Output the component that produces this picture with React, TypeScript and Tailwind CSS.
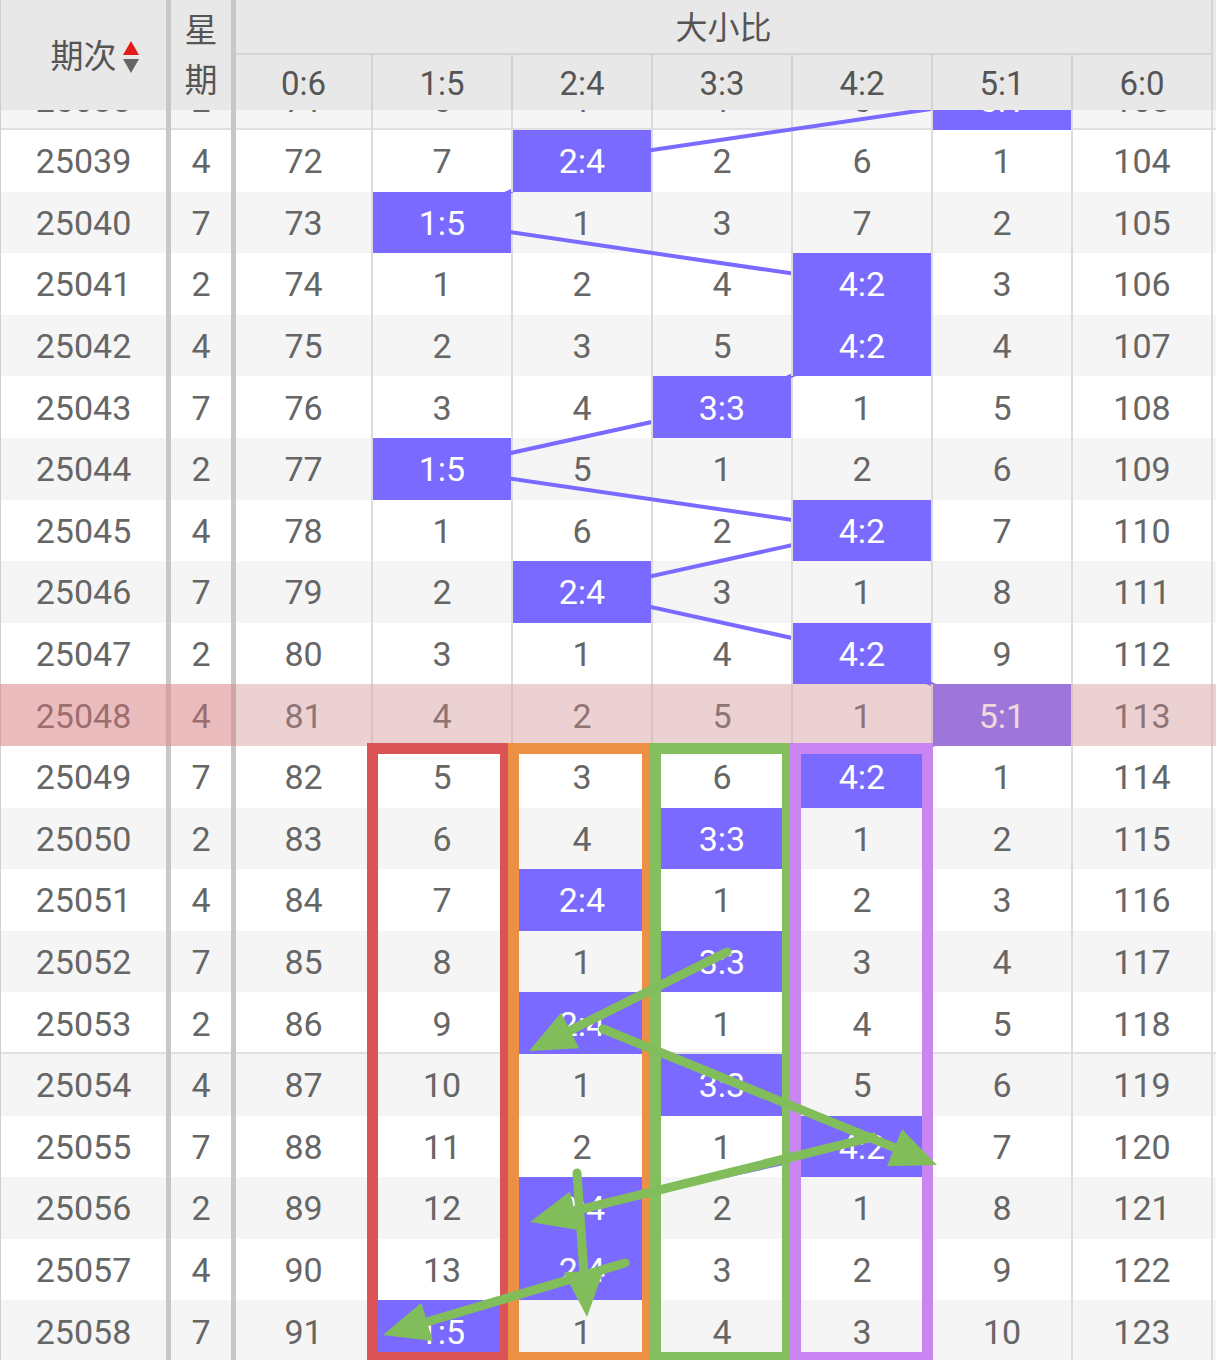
import clsx from "clsx";

const COLS = ["0:6", "1:5", "2:4", "3:3", "4:2", "5:1", "6:0"];
const ROW_H = 61.6;
// centre x of each ratio column, page coords
const CX = [303.5, 441, 581, 721, 861, 1001, 1141];

const GRID = "grid grid-cols-[166px_5px_60px_5px_135px_repeat(6,140px)_2px]";

type Row = { no: number; wk: number; v: (number | null)[] };

// null = the ratio that came out that draw
const ROWS: Row[] = [
  { no: 25038, wk: 2, v: [71, 6, 1, 1, 5, null, 103] },
  { no: 25039, wk: 4, v: [72, 7, null, 2, 6, 1, 104] },
  { no: 25040, wk: 7, v: [73, null, 1, 3, 7, 2, 105] },
  { no: 25041, wk: 2, v: [74, 1, 2, 4, null, 3, 106] },
  { no: 25042, wk: 4, v: [75, 2, 3, 5, null, 4, 107] },
  { no: 25043, wk: 7, v: [76, 3, 4, null, 1, 5, 108] },
  { no: 25044, wk: 2, v: [77, null, 5, 1, 2, 6, 109] },
  { no: 25045, wk: 4, v: [78, 1, 6, 2, null, 7, 110] },
  { no: 25046, wk: 7, v: [79, 2, null, 3, 1, 8, 111] },
  { no: 25047, wk: 2, v: [80, 3, 1, 4, null, 9, 112] },
  { no: 25048, wk: 4, v: [81, 4, 2, 5, 1, null, 113] },
  { no: 25049, wk: 7, v: [82, 5, 3, 6, null, 1, 114] },
  { no: 25050, wk: 2, v: [83, 6, 4, null, 1, 2, 115] },
  { no: 25051, wk: 4, v: [84, 7, null, 1, 2, 3, 116] },
  { no: 25052, wk: 7, v: [85, 8, 1, null, 3, 4, 117] },
  { no: 25053, wk: 2, v: [86, 9, null, 1, 4, 5, 118] },
  { no: 25054, wk: 4, v: [87, 10, 1, null, 5, 6, 119] },
  { no: 25055, wk: 7, v: [88, 11, 2, 1, null, 7, 120] },
  { no: 25056, wk: 2, v: [89, 12, null, 2, 1, 8, 121] },
  { no: 25057, wk: 4, v: [90, 13, null, 3, 2, 9, 122] },
  { no: 25058, wk: 7, v: [91, null, 1, 4, 3, 10, 123] },
];

const ARROWS = [
  [727, 952, 529, 1051],
  [603, 1029, 937, 1165],
  [873, 1137, 530, 1222],
  [577, 1173, 587, 1317],
  [625, 1263, 383, 1335],
];

function SortIcon() {
  return (
    <svg className="absolute left-full top-1/2 ml-[6px] -translate-y-1/2" width="16" height="32" viewBox="0 0 16 32">
      <polygon points="0,14 16,14 8,0" fill="#e41b1b" />
      <polygon points="0,18 16,18 8,32" fill="#666" />
    </svg>
  );
}

function Header() {
  return (
    <div className={clsx(GRID, "relative z-10 h-[110px] grid-rows-[55px_55px] bg-[#e8e8e8] text-[33px] text-[#555]")}>
      <div className="row-span-2 flex items-center justify-center border-l border-[#cfcfcf] pt-[3px]">
        <span className="relative leading-none">
          期次
          <SortIcon />
        </span>
      </div>
      <div className="row-span-2 bg-[#c8c8c8]" />
      <div className="row-span-2 flex flex-col items-center justify-center pt-[2px] leading-[50px]">
        <span>星</span>
        <span>期</span>
      </div>
      <div className="row-span-2 bg-[#c8c8c8]" />
      <div className="col-span-7 flex items-center justify-center border-b-2 border-[#d4d4d4] pt-[2px] text-[32px]">
        大小比
      </div>
      <div className="row-span-2 bg-[#d6d6d6]" />
      {COLS.map((c, i) => (
        <div
          key={c}
          className={clsx("flex items-center justify-center pt-[3px]", i > 0 && "border-l-2 border-[#d4d4d4]")}
        >
          {c}
        </div>
      ))}
    </div>
  );
}

function DataRow({ row, i }: { row: Row; i: number }) {
  const hl = row.no === 25048;
  const seam = row.no === 25038 || row.no === 25053;
  return (
    <div
      className={clsx(
        GRID,
        "relative h-[61.6px]",
        i % 2 === 0 ? "bg-[#f5f5f5]" : "bg-white",
        seam && "shadow-[inset_0_-2px_0_#e0e0e0]",
      )}
    >
      <div className="flex items-center justify-center border-l border-[#cfcfcf] pt-[2px]">{row.no}</div>
      <div className="bg-[#c8c8c8]" />
      <div className="flex items-center justify-center pt-[2px]">{row.wk}</div>
      <div className="bg-[#c8c8c8]" />
      {row.v.map((n, c) =>
        n === null ? (
          <div
            key={c}
            className={clsx(
              "relative z-[2] flex items-center justify-center bg-[#7a6aff] pt-[2px] text-white",
              c > 0 && "border-l-2 border-[#dcdcdc]",
            )}
          >
            {COLS[c]}
          </div>
        ) : (
          <div
            key={c}
            className={clsx("flex items-center justify-center pt-[2px]", c > 0 && "border-l-2 border-[#dcdcdc]")}
          >
            {n}
          </div>
        ),
      )}
      <div className="bg-[#dcdcdc]" />
      {hl && (
        <>
          <div className="absolute inset-y-0 left-0 z-[3] w-[236px] bg-[rgba(225,120,125,0.45)]" />
          <div className="absolute inset-y-0 right-0 left-[236px] z-[3] bg-[rgba(220,142,145,0.35)]" />
        </>
      )}
    </div>
  );
}

function Arrow({ a }: { a: number[] }) {
  const [x1, y1, x2, y2] = a;
  const len = Math.hypot(x2 - x1, y2 - y1);
  const ux = (x2 - x1) / len;
  const uy = (y2 - y1) / len;
  const L = 46;
  const W = 20;
  const bx = x2 - ux * L;
  const by = y2 - uy * L;
  const pts = `${x2},${y2} ${bx - uy * W},${by + ux * W} ${bx + uy * W},${by - ux * W}`;
  return (
    <g>
      <line x1={x1} y1={y1} x2={bx + ux * 4} y2={by + uy * 4} stroke="#82bd5c" strokeWidth={9} strokeLinecap="round" />
      <polygon points={pts} fill="#82bd5c" />
    </g>
  );
}

export default function App() {
  const pts = ROWS.map((r, i) => `${CX[r.v.indexOf(null)]},${i * ROW_H + ROW_H / 2}`).join(" ");

  return (
    <div className="relative h-[1360px] w-[1216px] overflow-hidden bg-white font-['Roboto','Noto_Sans_CJK_SC',sans-serif] text-[34px] text-[#666]">
      <Header />

      {/* body scrolled a bit so 25038 hides under the header */}
      <div className="relative z-0 -mt-[41.6px]">
        <svg className="absolute left-0 top-0 z-[1]" width={1216} height={ROWS.length * ROW_H}>
          <polyline points={pts} fill="none" stroke="#7a6aff" strokeWidth={4} />
        </svg>
        {ROWS.map((r, i) => (
          <DataRow key={r.no} row={r} i={i} />
        ))}
      </div>

      {/* hand-drawn markup over the chart */}
      <div className="pointer-events-none absolute inset-0 z-20">
        <div className="absolute left-[367px] top-[743px] h-[620px] w-[144px] border-[11px] border-[#da5357]" />
        <div className="absolute left-[508px] top-[743px] h-[620px] w-[145px] border-[11px] border-[#ec9045]" />
        <div className="absolute left-[650px] top-[743px] h-[620px] w-[143px] border-[11px] border-[#84bf5f]" />
        <div className="absolute left-[790px] top-[743px] h-[620px] w-[143px] border-[11px] border-[#c986f3]" />
        <svg className="absolute left-0 top-0" width={1216} height={1360}>
          {ARROWS.map((a, i) => (
            <Arrow key={i} a={a} />
          ))}
        </svg>
      </div>
    </div>
  );
}
